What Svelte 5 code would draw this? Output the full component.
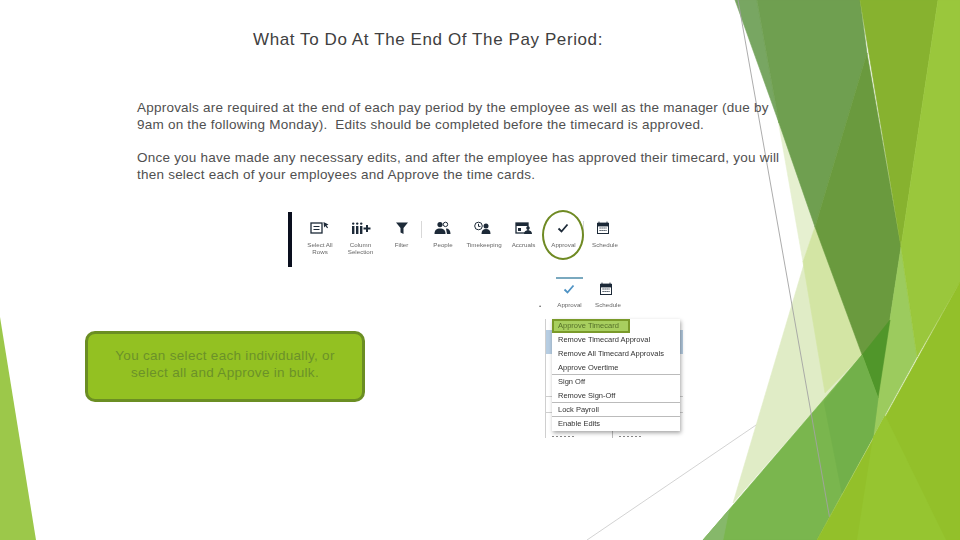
<script>
	const tools = [
		{ id: 'select', w: 40, lines: ['Select All', 'Rows'] },
		{ id: 'columns', w: 41, lines: ['Column', 'Selection'] },
		{ id: 'filter', w: 41, lines: ['Filter'] },
		{ id: 'people', w: 42, lines: ['People'] },
		{ id: 'clock', w: 40, lines: ['Timekeeping'] },
		{ id: 'accruals', w: 39, lines: ['Accruals'] },
		{ id: 'check', w: 41, lines: ['Approval'] },
		{ id: 'calendar', w: 42, lines: ['Schedule'] }
	];

	const menu = [
		{ label: 'Approve Timecard', active: true },
		{ label: 'Remove Timecard Approval' },
		{ label: 'Remove All Timecard Approvals' },
		{ label: 'Approve Overtime', rule: true },
		{ label: 'Sign Off' },
		{ label: 'Remove Sign-Off', rule: true },
		{ label: 'Lock Payroll', rule: true },
		{ label: 'Enable Edits' }
	];

	// facet background, painted back to front
	const facets = [
		{ c: '#e6f0d0', p: '757,0 815,227 803,262' },
		{ c: '#e0ecc6', p: '815,227 733,503 865,352' },
		{ c: '#d3e5a4', p: '815,227 803,262 825,393 862,355' },
		{ c: '#78a662', p: '735,0 757,0 779,123' },
		{ c: '#6f9f50', p: '757,0 860,0 867,53 815,227 779,123' },
		{ c: '#6a9a3e', p: '867,53 901,247 878,398 815,227' },
		{ c: '#87b22f', p: '860,0 938,0 901,247' },
		{ c: '#9ccb5e', p: '901,247 917,357 873,437 878,398' },
		{ c: '#50962a', p: '862,355 890,320 878,398' },
		{ c: '#7ab64e', p: '703,540 862,355 878,398 873,437 817,540' },
		{ c: '#72b04a', p: '824,402 862,355 878,398 873,437 842,493' },
		{ c: '#86b86a', p: '703,540 729,510 723,540' }
	];
</script>

{#snippet icon(id)}
	<svg class="glyph" viewBox="0 0 24 14">
		{#if id === 'select'}
			<rect x="3" y="2" width="11" height="10" fill="none" stroke="#1d2a38" stroke-width="1.3" />
			<path d="M5.5 5.5h6M5.5 8.5h6" stroke="#1d2a38" stroke-width="1.2" />
			<path d="M15.5 1l5 2.6-2 .8 1.6 2.2-1 .7-1.6-2.2-1.4 1.4z" fill="#1d2a38" />
		{:else if id === 'columns'}
			<path d="M3 5h2.4v8H3zM7 5h2.4v8H7zM11 5h2.4v8H11z" fill="#1d2a38" />
			<circle cx="4.2" cy="2.6" r="1.2" fill="#1d2a38" />
			<circle cx="8.2" cy="2.6" r="1.2" fill="#1d2a38" />
			<circle cx="12.2" cy="2.6" r="1.2" fill="#1d2a38" />
			<path d="M14.5 7.5h7M18 4v7" stroke="#1d2a38" stroke-width="2" />
		{:else if id === 'filter'}
			<path d="M6 1.5h12l-4.5 5.5v6l-3-1.500V7z" fill="#1d2a38" />
		{:else if id === 'people'}
			<circle cx="9" cy="3.6" r="2.6" fill="#1d2a38" />
			<circle cx="14.5" cy="3.4" r="2.2" fill="none" stroke="#1d2a38" stroke-width="1" />
			<path d="M3.5 13c0-4 2-5.5 5.5-5.5s5.500 1.500 5.500 5.500z" fill="#1d2a38" />
			<path d="M15 7.500c3 0 4.500 2 4.500 5.500h-3.500z" fill="#1d2a38" />
		{:else if id === 'clock'}
			<circle cx="6.500" cy="5" r="3.800" fill="none" stroke="#1d2a38" stroke-width="1" />
			<path d="M6.500 2.800v2.600h2" fill="none" stroke="#1d2a38" stroke-width="1" />
			<circle cx="14" cy="5" r="2.500" fill="#1d2a38" />
			<path d="M9.500 13c0-3.500 1.500-5 4.500-5s4.500 1.500 4.500 5z" fill="#1d2a38" />
		{:else if id === 'accruals'}
			<rect x="4" y="2" width="12" height="10" fill="none" stroke="#1d2a38" stroke-width="1.300" />
			<path d="M4 2h12v3H4zM6 7h3v3H6z" fill="#1d2a38" />
			<circle cx="16" cy="7" r="1.800" fill="#1d2a38" />
			<path d="M12 13c0-2.500 1.500-3.800 4-3.800s4 1.300 4 3.800z" fill="#1d2a38" />
		{:else if id === 'check'}
			<path d="M6.500 7.500l3 3 6-7" fill="none" stroke="#1d2a38" stroke-width="1.800" />
		{:else if id === 'calendar'}
			<rect x="4.500" y="2.500" width="11" height="10" fill="none" stroke="#1d2a38" stroke-width="1" />
			<path d="M4.500 2h11v3h-11zM6 0.500v2M14 0.500v2" fill="#1d2a38" stroke="#1d2a38" stroke-width="0.800" />
			<path d="M6.500 7h7M6.500 9.500h7" stroke="#1d2a38" stroke-width="1" stroke-dasharray="1.200 0.800" />
		{/if}
	</svg>
{/snippet}

<div class="slide">
	<svg class="facets" viewBox="0 0 960 540">
		<polygon points="0,317 36,540 0,540" fill="#9cc84a" />
		<line x1="587" y1="540" x2="862" y2="353" stroke="#c8c8c8" stroke-width="0.800" />
		{#each facets as f}
			<polygon points={f.p} fill={f.c} stroke={f.c} stroke-width="0.600" />
		{/each}
		<line x1="738" y1="0" x2="830" y2="520" stroke="#a3a3a3" stroke-width="0.900" />
		<polygon points="938,0 960,0 960,282 917,357 901,247" fill="#9ac73c" stroke="#9ac73c" stroke-width="0.600" />
		<polygon points="817,540 960,282 960,540" fill="#93c02a" stroke="#93c02a" stroke-width="0.600" />
		<polygon points="857,540 873,437 885,415 946,540" fill="#96c530" />
	</svg>

	<div class="content">
		<h1>What To Do At The End Of The Pay Period:</h1>

		<div class="body">
			<p>Approvals are required at the end of each pay period by the employee as well as the manager (due by<br />9am on the following Monday).&nbsp; Edits should be completed before the timecard is approved.</p>
			<p>Once you have made any necessary edits, and after the employee has approved their timecard, you will<br />then select each of your employees and Approve the time cards.</p>
		</div>

		<div class="toolbar">
			{#each tools as t}
				<div class="tool" class:ruled={t.id === 'filter' || t.id === 'check'} style:width="{t.w}px">
					{@render icon(t.id)}
					{#each t.lines as line}
						<span>{line}</span>
					{/each}
				</div>
			{/each}
			<div class="oval"></div>
		</div>

		<div class="lower">
			<div class="callout">You can select each individually, or<br />select all and Approve in bulk.</div>

			<div class="shot">
				<div class="tabs">
					<span class="dot">•</span>
					<div class="tab current">
						{@render icon('check')}
						<span>Approval</span>
					</div>
					<div class="tab">
						{@render icon('calendar')}
						<span>Schedule</span>
					</div>
				</div>
				<div class="table">
					<ul class="menu">
						{#each menu as item}
							<li class:active={item.active} class:rule={item.rule}>{item.label}</li>
						{/each}
					</ul>
				</div>
			</div>
		</div>
	</div>
</div>

<style>
	:global(body) {
		margin: 0;
		background: #fff;
	}

	.slide {
		position: relative;
		width: 960px;
		height: 540px;
		overflow: hidden;
		font-family: 'Liberation Sans', Arial, sans-serif;
		color: #404040;
	}

	.facets {
		position: absolute;
		inset: 0;
		width: 960px;
		height: 540px;
	}

	.content {
		position: relative;
		padding: 30px 0 0 85px;
	}

	h1 {
		width: 686px;
		margin: 0;
		font-size: 17px;
		line-height: 20px;
		font-weight: 400;
		text-align: center;
		letter-spacing: 0.6px;
	}

	.body {
		margin: 49px 0 0 52px;
		font-size: 13.500px;
		line-height: 17px;
		white-space: nowrap;
		letter-spacing: 0.225px;
		color: #505050;
	}

	.body p {
		margin: 0 0 16px;
	}

	.toolbar {
		position: relative;
		display: flex;
		width: 338px;
		height: 55px;
		margin: 29px 0 0 203px;
		padding-left: 8px;
		box-sizing: border-box;
		border-left: 4px solid #0a0f1e;
		filter: blur(0.55px);
	}

	.tool {
		position: relative;
		display: flex;
		flex-direction: column;
		align-items: center;
		padding-top: 9px;
		box-sizing: border-box;
		font-size: 6.200px;
		line-height: 7px;
		color: #666;
		white-space: nowrap;
	}

	.tool.ruled::after {
		content: '';
		position: absolute;
		right: 0;
		top: 9px;
		width: 1px;
		height: 17px;
		background: #d8d8d8;
	}

	.glyph {
		width: 24px;
		height: 14px;
		margin-bottom: 6px;
		flex: none;
	}

	.oval {
		position: absolute;
		left: 250px;
		top: -2px;
		width: 38px;
		height: 46px;
		border: 2.500px solid #6f8a23;
		border-radius: 50%;
	}

	.lower {
		display: flex;
		align-items: flex-start;
		margin-top: 10px;
	}

	.callout {
		width: 280px;
		height: 71px;
		margin-top: 54px;
		padding-top: 13px;
		box-sizing: border-box;
		border: 3px solid #6b8e23;
		border-radius: 10px;
		background: #93c122;
		color: #6b9129;
		font-size: 13.500px;
		line-height: 17px;
		text-align: center;
		letter-spacing: 0.3px;
	}

	.shot {
		width: 150px;
		margin-left: 174px;
		filter: blur(0.45px);
	}

	.tabs {
		display: flex;
		align-items: flex-start;
		height: 42px;
		font-size: 6.200px;
		color: #666;
	}

	.dot {
		width: 17px;
		padding-top: 25px;
	}

	.tab {
		display: flex;
		flex-direction: column;
		align-items: center;
		width: 40px;
		padding-top: 5px;
		box-sizing: border-box;
	}

	.tab.current {
		border-top: 2px solid #7aa9bf;
		width: 27px;
		margin-right: 5px;
		padding-top: 3px;
	}

	.tab.current .glyph path {
		stroke: #4f93c4;
	}

	.tab .glyph {
		margin-bottom: 5px;
	}

	.table {
		position: relative;
		width: 137px;
		height: 119px;
		margin-left: 6px;
		background:
			linear-gradient(#b6cde2, #b6cde2) 0 11px / 100% 24px no-repeat,
			linear-gradient(#cfcfcf, #cfcfcf) 0 77px / 100% 1px no-repeat,
			linear-gradient(#cfcfcf, #cfcfcf) 0 93px / 100% 1px no-repeat,
			repeating-linear-gradient(90deg, #888 0 2px, transparent 2px 4px) 6px 117px / 24px 1px no-repeat,
			repeating-linear-gradient(90deg, #888 0 2px, transparent 2px 4px) 73px 117px / 22px 1px no-repeat,
			linear-gradient(#bbb, #bbb) 66px 112px / 1px 7px no-repeat;
		border-left: 1px solid #cfcfcf;
	}

	.menu {
		position: absolute;
		left: 6px;
		top: 0;
		width: 128px;
		height: 112px;
		margin: 0;
		padding: 0;
		list-style: none;
		background: #fff;
		box-shadow: 1px 2px 4px rgba(0, 0, 0, 0.35);
		font-size: 7.500px;
		color: #333;
	}

	.menu li {
		height: 14px;
		line-height: 13px;
		padding-left: 6px;
		box-sizing: border-box;
		white-space: nowrap;
	}

	.menu li.rule {
		border-bottom: 1px solid #bbb;
	}

	.menu li.active {
		width: 78px;
		background: #a8cf5f;
		outline: 2px solid #7a9a2a;
		outline-offset: -2px;
		color: #55702a;
	}
</style>
